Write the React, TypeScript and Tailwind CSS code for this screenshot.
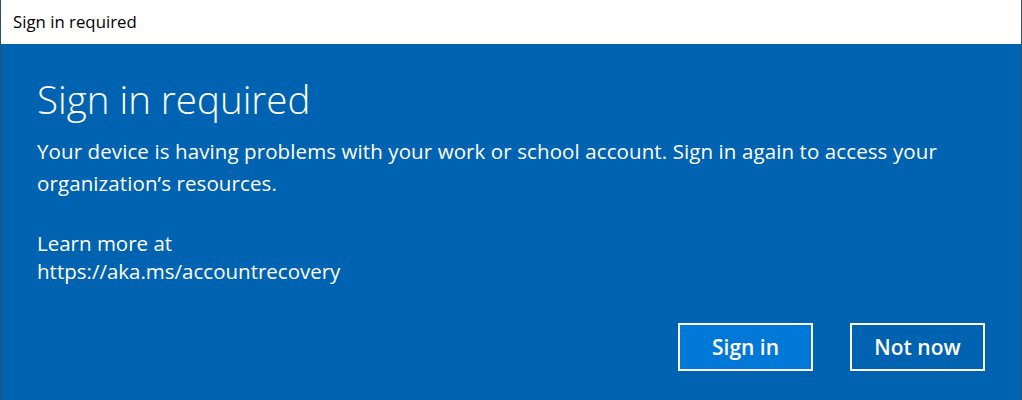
export default function App() {
  return (
    <div
      className="flex h-[400px] w-[1022px] flex-col overflow-hidden border-x border-[#2b4f73] bg-[#0063b1]"
      style={{ fontFamily: '"Open Sans", "Noto Sans", sans-serif' }}
    >
      <div className="flex h-[44px] shrink-0 items-center bg-white pl-[12px] text-[16.8px] text-black">
        Sign in required
      </div>

      <div className="flex flex-1 flex-col px-[36px] pt-[29px] text-white">
        <h1 className="text-[38.5px] font-light leading-[52px]">Sign in required</h1>
        <p className="mt-[10px] max-w-[925px] text-[20.5px] leading-[32px] tracking-[0.1px]">
          Your device is having problems with your work or school account. Sign in again to access your
          organization’s resources.
        </p>
        <p className="mt-[30px] text-[20.5px] leading-[28px]">
          Learn more at
          <br />
          https://aka.ms/accountrecovery
        </p>

        <div className="mt-auto mb-[29px] flex justify-end gap-[37px]">
          <button className="h-[48px] w-[135px] border-2 border-white bg-[#0078d7] pt-[2px] text-[21px] font-semibold text-white">
            Sign in
          </button>
          <button className="h-[48px] w-[135px] border-2 border-white bg-transparent pt-[2px] text-[21px] font-semibold text-white">
            Not now
          </button>
        </div>
      </div>
    </div>
  );
}
